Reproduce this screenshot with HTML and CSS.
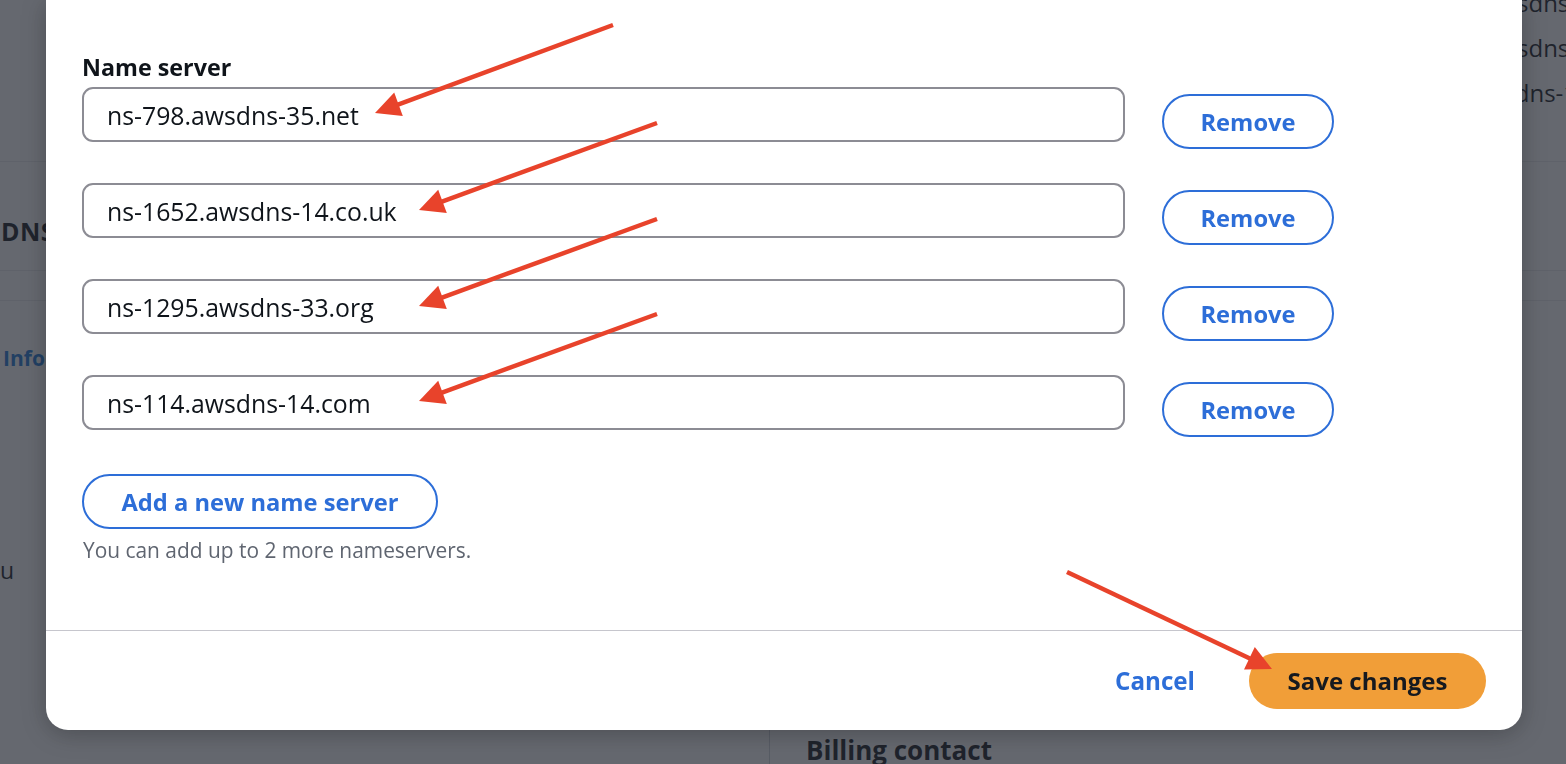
FILE: index.html
```html
<!DOCTYPE html>
<html lang="en">
<head>
<meta charset="utf-8">
<title>Edit name servers</title>
<link rel="stylesheet" href="styles.css">
</head>
<body>
<div class="page">
  <section class="bg-top">
    <div class="bg-ns">
      <div>ns-1652.awsdns-14.co.uk</div>
      <div>ns-1295.awsdns-33.org</div>
      <div>ns-114.awsdns-14.com</div>
    </div>
  </section>
  <section class="bg-head"><h2 class="bg-title">DNSSEC keys</h2></section>
  <section class="bg-tabs"></section>
  <section class="bg-body">
    <div class="bg-info">Info</div>
    <div class="bg-u">u</div>
  </section>
  <section class="bg-bottom">
    <div class="bg-col-left"></div>
    <div class="bg-col-right"><h3 class="bg-sub">Billing contact</h3></div>
  </section>
</div>

<div class="overlay">
  <div class="modal" role="dialog">
    <div class="modal-body">
      <label class="field-label">Name server</label>
      <div class="ns-rows">
        <div class="ns-row">
          <div class="ns-input">ns-798.awsdns-35.net</div>
          <button class="btn-outline btn-remove">Remove</button>
        </div>
        <div class="ns-row">
          <div class="ns-input">ns-1652.awsdns-14.co.uk</div>
          <button class="btn-outline btn-remove">Remove</button>
        </div>
        <div class="ns-row">
          <div class="ns-input">ns-1295.awsdns-33.org</div>
          <button class="btn-outline btn-remove">Remove</button>
        </div>
        <div class="ns-row">
          <div class="ns-input">ns-114.awsdns-14.com</div>
          <button class="btn-outline btn-remove">Remove</button>
        </div>
      </div>
      <button class="btn-outline btn-add">Add a new name server</button>
      <p class="helper">You can add up to 2 more nameservers.</p>
    </div>
    <div class="modal-footer">
      <button class="btn-link">Cancel</button>
      <button class="btn-primary">Save changes</button>
    </div>
  </div>
</div>

<svg class="arrows" width="1566" height="764" viewBox="0 0 1566 764" aria-hidden="true">
  <g stroke="#e8432b" stroke-width="4.5" fill="none" stroke-linecap="butt">
    <line x1="613" y1="25" x2="391.9" y2="106.8"/>
    <line x1="657" y1="123" x2="435.9" y2="203.8"/>
    <line x1="657" y1="219" x2="435.9" y2="299.8"/>
    <line x1="657" y1="314" x2="435.9" y2="394.8"/>
    <line x1="1067" y1="572" x2="1255.7" y2="661.3"/>
  </g>
  <g fill="#e8432b">
    <polygon points="375,113 402.8,116 394.2,92.6"/>
    <polygon points="419,210 446.8,213.1 438.2,189.7"/>
    <polygon points="419,306 446.8,309.1 438.2,285.7"/>
    <polygon points="419,401 446.8,404.1 438.2,380.7"/>
    <polygon points="1272,669 1244,669.6 1254.8,647"/>
  </g>
</svg>
</body>
</html>
```

FILE: styles.css
```css
* { box-sizing: border-box; }

html, body {
  margin: 0;
  padding: 0;
  width: 1566px;
  height: 764px;
  overflow: hidden;
  background: #ffffff;
  font-family: "Open Sans", "Noto Sans", "Liberation Sans", sans-serif;
  color: #0f141a;
}

/* ---------- background page ---------- */
.page {
  width: 1566px;
  height: 764px;
  overflow: hidden;
  display: flex;
  flex-direction: column;
}

.bg-top {
  height: 162px;
  flex: none;
  border-bottom: 1px solid #e9ebed;
  overflow: hidden;
}

.bg-ns {
  margin-top: -20px;
  margin-left: 1390px;
  font-size: 24px;
  line-height: 45px;
  color: #16191f;
  white-space: nowrap;
}

.bg-head {
  height: 109px;
  flex: none;
  border-bottom: 1px solid #e9ebed;
  padding: 0 0 0 1px;
  display: flex;
  align-items: center;
}

.bg-title {
  margin: 30px 0 0;
  font-size: 25px;
  font-weight: 700;
  letter-spacing: 0.5px;
  color: #16191f;
}

.bg-tabs {
  height: 30px;
  flex: none;
  border-bottom: 1px solid #e9ebed;
}

.bg-body {
  height: 429px;
  flex: none;
  padding-top: 43px;
}

.bg-info {
  padding-left: 3px;
  font-size: 21px;
  font-weight: 700;
  color: #1f7ad8;
  line-height: 28px;
}

.bg-u {
  margin-top: 184px;
  font-size: 23px;
  line-height: 28px;
  color: #16191f;
}

.bg-bottom {
  flex: 1;
  display: grid;
  grid-template-columns: 770px 1fr;
}

.bg-col-left { border-right: 1px solid #d1d5db; }

.bg-col-right { padding-left: 36px; }

.bg-sub {
  margin: 2px 0 0;
  font-size: 26px;
  font-weight: 700;
  color: #16191f;
}

/* ---------- overlay + modal ---------- */
.overlay {
  position: fixed;
  inset: 0;
  background: rgba(35, 40, 50, 0.7);
  padding: 0 44px 0 46px;
}

.modal {
  background: #ffffff;
  border-radius: 0 0 22px 22px;
  box-shadow: 0 4px 24px rgba(0, 0, 0, 0.25);
}

.modal-body {
  height: 630px;
  padding: 53px 36px 0;
}

.field-label {
  display: block;
  font-size: 23.3px;
  line-height: 28px;
  font-weight: 700;
  color: #0f141a;
  margin-bottom: 6px;
}

.ns-rows {
  display: flex;
  flex-direction: column;
  gap: 34px;
}

.ns-row {
  display: grid;
  grid-template-columns: 1043px 172px;
  column-gap: 37px;
  align-items: start;
}

.ns-input {
  height: 55px;
  border: 2px solid #8c8c94;
  border-radius: 11px;
  padding: 0 23px;
  display: flex;
  align-items: center;
  font-size: 24.8px;
  color: #0f141a;
  white-space: nowrap;
}

.btn-outline {
  font-family: inherit;
  background: #ffffff;
  border: 2px solid #2d6ed8;
  color: #2d6ed8;
  font-size: 23.7px;
  font-weight: 700;
  height: 55px;
  border-radius: 28px;
  padding: 0;
  cursor: pointer;
}

.btn-remove {
  width: 172px;
  margin-top: 7px;
}

.btn-add {
  display: block;
  width: 356px;
  margin-top: 37px;
}

.helper {
  margin: 9px 0 0 1px;
  font-size: 20.9px;
  line-height: 24px;
  color: #5f6570;
}

.modal-footer {
  height: 100px;
  border-top: 1px solid #c6c6cd;
  display: flex;
  justify-content: flex-end;
  align-items: center;
  padding: 0 36px 0 0;
}

.btn-link {
  font-family: inherit;
  background: none;
  border: none;
  color: #2d6ed8;
  font-size: 24.2px;
  font-weight: 700;
  padding: 0;
  margin-right: 54px;
  cursor: pointer;
}

.btn-primary {
  font-family: inherit;
  width: 237px;
  height: 56px;
  border: none;
  border-radius: 28px;
  background: #f19e38;
  color: #16191f;
  font-size: 24px;
  font-weight: 700;
  padding: 0;
  cursor: pointer;
}

/* ---------- annotation arrows ---------- */
.arrows {
  position: fixed;
  top: 0;
  left: 0;
  pointer-events: none;
}
```
